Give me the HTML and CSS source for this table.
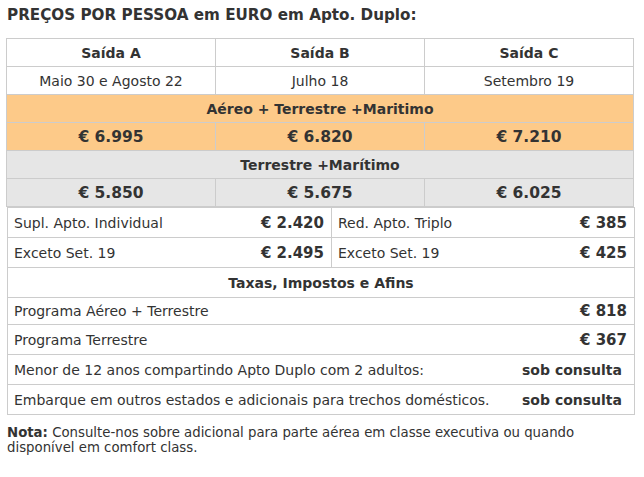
FILE: index.html
```html
<!DOCTYPE html>
<html lang="pt">
<head>
<meta charset="utf-8">
<link rel="stylesheet" href="styles.css">
</head>
<body>
<h1 class="title">PREÇOS POR PESSOA em EURO em Apto. Duplo:</h1>
<table class="prices">
  <tr class="head"><td>Saída A</td><td>Saída B</td><td>Saída C</td></tr>
  <tr class="dates"><td>Maio 30 e Agosto 22</td><td>Julho 18</td><td>Setembro 19</td></tr>
  <tr class="orange sect"><td colspan="3">Aéreo + Terrestre +Maritimo</td></tr>
  <tr class="orange val"><td>€ 6.995</td><td>€ 6.820</td><td>€ 7.210</td></tr>
  <tr class="grey sect"><td colspan="3">Terrestre +Marítimo</td></tr>
  <tr class="grey val"><td>€ 5.850</td><td>€ 5.675</td><td>€ 6.025</td></tr>
</table>
<table class="extras">
  <colgroup><col class="c1"><col class="c2"><col class="c3"><col class="c4"></colgroup>
  <tr><td class="lbl">Supl. Apto. Individual</td><td class="num">€ 2.420</td><td class="lbl split">Red. Apto. Triplo</td><td class="num">€ 385</td></tr>
  <tr><td class="lbl">Exceto Set. 19</td><td class="num">€ 2.495</td><td class="lbl split">Exceto Set. 19</td><td class="num">€ 425</td></tr>
  <tr><td class="sect" colspan="4">Taxas, Impostos e Afins</td></tr>
  <tr class="short"><td class="lbl" colspan="3">Programa Aéreo + Terrestre</td><td class="num">€ 818</td></tr>
  <tr><td class="lbl" colspan="3">Programa Terrestre</td><td class="num">€ 367</td></tr>
  <tr><td class="lbl" colspan="3">Menor de 12 anos compartindo Apto Duplo com 2 adultos:</td><td class="num cons">sob consulta</td></tr>
  <tr><td class="lbl" colspan="3">Embarque em outros estados e adicionais para trechos domésticos.</td><td class="num cons">sob consulta</td></tr>
</table>
<p class="note"><b>Nota:</b> Consulte-nos sobre adicional para parte aérea em classe executiva ou quando disponível em comfort class.</p>
</body>
</html>
```
FILE: styles.css
```css
html, body {
  margin: 0;
  background: #fff;
}
body {
  padding: 6px 10px 0 6px;
  font-family: "DejaVu Sans", Verdana, sans-serif;
  color: #333;
  font-size: 14px;
}
.title {
  margin: 0 0 14px 1px;
  font-size: 15.2px;
  font-weight: bold;
  line-height: 18px;
}
table {
  border-collapse: collapse;
}
.prices {
  width: 628px;
  table-layout: fixed;
}
.prices td {
  border: 1px solid #ccc;
  text-align: center;
  height: 27px;
  padding: 0;
  line-height: 16px;
}
.prices .head td,
.prices .sect td {
  font-weight: bold;
}
.prices .val td {
  font-weight: bold;
  font-size: 15.5px;
}
.orange td {
  background: #fdca89;
}
.grey td {
  background: #e6e6e6;
}
.extras {
  width: 627px;
  margin-left: 1px;
  table-layout: fixed;
  border: 1px solid #ccc;
}
.extras .c1 { width: 240px; }
.extras .c2 { width: 84px; }
.extras .c3 { width: 183px; }
.extras .c4 { width: 120px; }
.extras td {
  border-top: 1px solid #ccc;
  border-bottom: 1px solid #ccc;
  height: 29px;
  padding: 0 6px;
  line-height: 16px;
  white-space: nowrap;
}
.extras .split {
  border-left: 1px solid #ccc;
}
.extras .num {
  text-align: right;
  font-weight: bold;
  font-size: 15px;
  padding-right: 7px;
}
.extras .cons {
  font-size: 14px;
  padding-right: 12px;
}
.extras .sect {
  text-align: center;
  font-weight: bold;
}
.extras tr.short td {
  height: 26px;
}
.note {
  margin: 10px 0 0 1px;
  font-size: 13.3px;
  line-height: 15px;
  width: 590px;
}
```
